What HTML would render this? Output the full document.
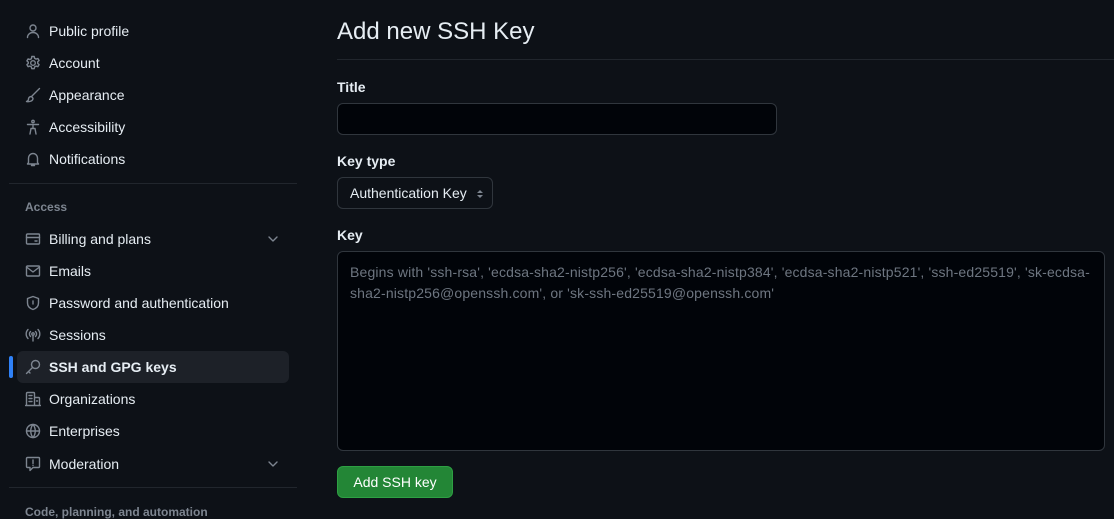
<!DOCTYPE html>
<html><head><meta charset="utf-8"><style>
*{box-sizing:border-box;margin:0;padding:0}
body{width:1114px;height:512px;overflow:hidden;background:#0d1117;color:#e6edf3;font-family:"Liberation Sans",sans-serif;font-size:14px;position:relative}
.it{position:absolute;left:17px;width:272px;height:32px;border-radius:6px;display:flex;align-items:center;padding-left:8px}
.it svg{width:16px;height:16px;fill:none;stroke:#7d8590;stroke-width:1.4;stroke-linecap:round;stroke-linejoin:round;margin-right:8px;flex:none}
.it.act{background:#1d2128;font-weight:bold}
.chev{position:absolute;right:8px;top:8px;margin:0!important}
.hr{position:absolute;left:9px;width:288px;height:1px;background:#21262d}
.sec{position:absolute;left:25px;font-size:12px;font-weight:bold;color:#7d8590}
.lbl{position:absolute;left:337px;font-weight:bold;font-size:14px}
</style></head><body>
<div class="it" style="top:15px"><svg viewBox="0 0 16 16"><circle cx="8" cy="5" r="3"/><path d="M2.5 14.5c0-3 2.5-5 5.5-5s5.5 2 5.5 5"/></svg>Public profile</div>
<div class="it" style="top:47px"><svg viewBox="0 0 16 16"><circle cx="8" cy="8" r="2.3"/><path d="M6.8 1.5h2.4l.4 1.8 1.5.8 1.8-.6 1.2 2-1.4 1.3v1.6l1.4 1.3-1.2 2-1.8-.6-1.5.8-.4 1.8H6.8l-.4-1.8-1.5-.8-1.800.6-1.2-2 1.4-1.3V7.2L1.9 5.9l1.2-2 1.8.6 1.5-.8z"/></svg>Account</div>
<div class="it" style="top:79px"><svg viewBox="0 0 16 16"><path d="M14.5 1.5 7 9M6.5 9.5c-2 0-3 1.2-3 2.7 0 1-.8 1.8-2 2.3 3 .5 6.5-.3 6.5-3.3z"/></svg>Appearance</div>
<div class="it" style="top:111px"><svg viewBox="0 0 16 16"><circle cx="8" cy="2.5" r="1.2"/><path d="M2.5 5.5h11M8 5.5v4M5 15l1-5.5h4L11 15"/></svg>Accessibility</div>
<div class="it" style="top:143px"><svg viewBox="0 0 16 16"><path d="M3.5 11.5V7a4.5 4.5 0 0 1 9 0v4.5l1 1.5h-11zM6.5 14.5h3"/></svg>Notifications</div>
<div class="hr" style="top:183px"></div>
<div class="sec" style="top:200px">Access</div>
<div class="it" style="top:223px"><svg viewBox="0 0 16 16"><rect x="1.5" y="3" width="13" height="10" rx="1"/><path d="M1.5 6.5h13M10 10h2"/></svg>Billing and plans<svg class="chev" viewBox="0 0 16 16"><path d="M4 6l4 4 4-4"/></svg></div>
<div class="it" style="top:255px"><svg viewBox="0 0 16 16"><rect x="1.5" y="3" width="13" height="10" rx="1"/><path d="M1.5 4l6.5 5 6.5-5"/></svg>Emails</div>
<div class="it" style="top:287px"><svg viewBox="0 0 16 16"><path d="M8 1.5 2.5 3.5V8c0 3.5 2.5 5.5 5.5 6.5 3-1 5.5-3 5.5-6.5V3.5z"/><path d="M8 6v3"/></svg>Password and authentication</div>
<div class="it" style="top:319px"><svg viewBox="0 0 16 16"><circle cx="8" cy="7" r="1.2"/><path d="M8 8.5V14M5.5 4.5a3.5 3.5 0 0 0 0 5M10.5 4.5a3.5 3.5 0 0 1 0 5M3 2.5a6.5 6.5 0 0 0 0 9M13 2.5a6.5 6.5 0 0 1 0 9"/></svg>Sessions</div>
<div style="position:absolute;left:9px;top:356px;width:4px;height:22px;border-radius:2px;background:#2f81f7"></div>
<div class="it act" style="top:351px"><svg viewBox="0 0 16 16"><circle cx="10.5" cy="5.5" r="4"/><path d="M7.5 8.5 1.5 14.5M3.5 12.5l1.5 1.5"/></svg>SSH and GPG keys</div>
<div class="it" style="top:383px"><svg viewBox="0 0 16 16"><path d="M1.5 14.5V2.5a1 1 0 0 1 1-1h6a1 1 0 0 1 1 1v12M9.5 6.5h4a1 1 0 0 1 1 1v7M.5 14.5h15M4 4.5h3M4 7.5h3M4 10.5h3M11.5 10h1"/></svg>Organizations</div>
<div class="it" style="top:415px"><svg viewBox="0 0 16 16"><circle cx="8" cy="8" r="6.5"/><path d="M1.5 8h13M8 1.5c-3 3.5-3 9.5 0 13M8 1.5c3 3.5 3 9.5 0 13"/></svg>Enterprises</div>
<div class="it" style="top:448px"><svg viewBox="0 0 16 16"><path d="M2.5 1.5h11a1 1 0 0 1 1 1v8a1 1 0 0 1-1 1H8l-3 3v-3H2.5a1 1 0 0 1-1-1v-8a1 1 0 0 1 1-1zM8 4v3.5M8 9.3v.2"/></svg>Moderation<svg class="chev" viewBox="0 0 16 16"><path d="M4 6l4 4 4-4"/></svg></div>
<div class="hr" style="top:487px"></div>
<div class="sec" style="top:505px">Code, planning, and automation</div>

<div style="position:absolute;left:337px;top:18px;font-size:24px">Add new SSH Key</div>
<div style="position:absolute;left:337px;top:59px;width:777px;height:1px;background:#21262d"></div>
<div class="lbl" style="top:79px">Title</div>
<div style="position:absolute;left:337px;top:103px;width:440px;height:32px;background:#010409;border:1px solid #30363d;border-radius:6px"></div>
<div class="lbl" style="top:153px">Key type</div>
<div style="position:absolute;left:337px;top:177px;width:156px;height:32px;background:#0d1117;border:1px solid #30363d;border-radius:6px;padding:7px 0 0 12px">Authentication Key<svg style="position:absolute;right:8px;top:10px" width="8" height="12" viewBox="0 0 8 12"><path d="M1 5 4 2l3 3zM1 7l3 3 3-3z" fill="#7d8590"/></svg></div>
<div class="lbl" style="top:227px">Key</div>
<div style="position:absolute;left:337px;top:251px;width:768px;height:200px;background:#010409;border:1px solid #30363d;border-radius:6px;padding:10px 12px;color:#6e7681;line-height:21px;letter-spacing:0.16px">Begins with 'ssh-rsa', 'ecdsa-sha2-nistp256', 'ecdsa-sha2-nistp384', 'ecdsa-sha2-nistp521', 'ssh-ed25519', 'sk-ecdsa-sha2-nistp256@openssh.com', or 'sk-ssh-ed25519@openssh.com'</div>
<div style="position:absolute;left:337px;top:466px;width:116px;height:32px;background:#238636;border:1px solid #2ea043;border-radius:6px;text-align:center;line-height:30px;color:#fff">Add SSH key</div>
</body></html>
